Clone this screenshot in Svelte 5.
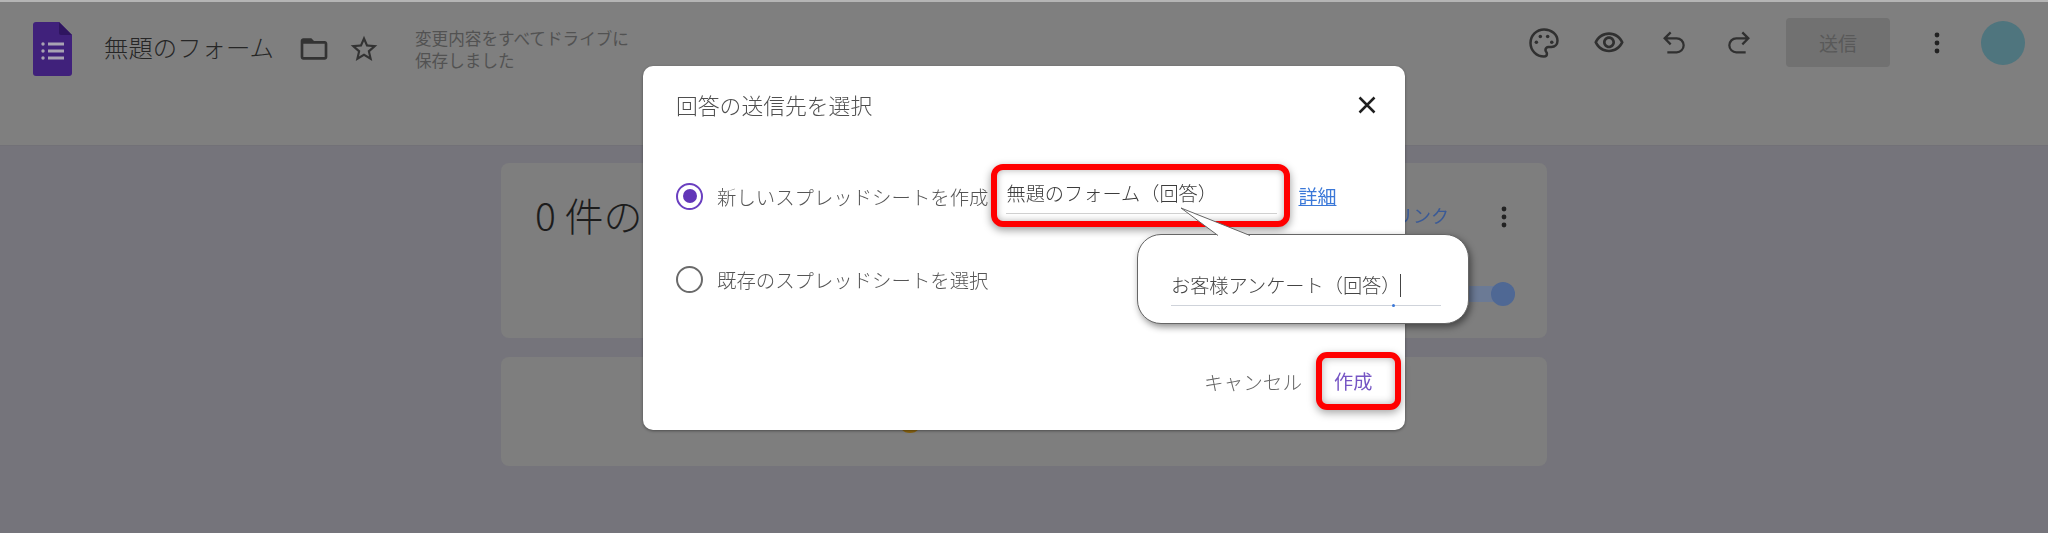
<script lang="ts">
    const headerActions = ["palette", "eye", "undo", "redo"];
</script>

<div class="page">
    <header class="topbar">
        <div class="left">
            <svg class="logo" viewBox="0 0 39 54">
                <path d="M3 0H26L39 13V51a3 3 0 0 1-3 3H3a3 3 0 0 1-3-3V3a3 3 0 0 1 3-3Z" fill="#40217b" />
                <path d="M26 0L39 13H28a2 2 0 0 1-2-2Z" fill="#2f1560" />
                <g fill="#a8a3b3">
                    <circle cx="10" cy="22" r="1.7" />
                    <circle cx="10" cy="29" r="1.7" />
                    <circle cx="10" cy="36" r="1.7" />
                    <rect x="15" y="20.5" width="16" height="3" />
                    <rect x="15" y="27.5" width="16" height="3" />
                    <rect x="15" y="34.5" width="16" height="3" />
                </g>
            </svg>
            <span class="doc-title">無題のフォーム</span>
            <svg class="folder" viewBox="0 0 24 24">
                <path d="M20 6h-8l-2-2H4c-1.1 0-1.99.9-1.99 2L2 18c0 1.1.9 2 2 2h16c1.1 0 2-.9 2-2V8c0-1.1-.9-2-2-2zm0 12H4V8h16v10z" />
            </svg>
            <svg class="star" viewBox="0 0 24 24">
                <path d="M22 9.24l-7.19-.62L12 2 9.19 8.63 2 9.24l5.46 4.73L5.82 21 12 17.27 18.18 21l-1.63-7.03L22 9.24zM12 15.4l-3.76 2.27 1-4.28-3.32-2.88 4.38-.38L12 6.1l1.71 4.04 4.38.38-3.32 2.88 1 4.28L12 15.4z" />
            </svg>
            <p class="saved">変更内容をすべてドライブに<br />保存しました</p>
        </div>
        <div class="right">
            <div class="actions">
                {#each headerActions as name}
                    <svg class="action" viewBox="0 0 24 24">
                        {#if name === "palette"}
                            <g transform="translate(12 12) scale(1.1) translate(-12 -12)">
                                <path class="line" d="M12 2.8C6.9 2.8 2.8 6.9 2.8 12s4.1 9.2 9.2 9.2c1.2 0 2-.9 2-1.9 0-.5-.2-1-.5-1.3-.3-.4-.5-.8-.5-1.3 0-1.1.9-2 2-2h2c2.6 0 4.2-1.9 4.2-4.2 0-4.3-4.1-7.7-9-7.7z" />
                                <circle cx="6.8" cy="11.5" r="1.2" />
                                <circle cx="9.5" cy="7.5" r="1.2" />
                                <circle cx="14.5" cy="7.5" r="1.2" />
                                <circle cx="17.3" cy="11.5" r="1.2" />
                            </g>
                        {:else if name === "eye"}
                            <path d="M12 6c3.79 0 7.17 2.13 8.82 5.5C19.17 14.87 15.79 17 12 17s-7.17-2.13-8.82-5.5C4.83 8.13 8.21 6 12 6m0-2C7 4 2.73 7.11 1 11.5 2.73 15.89 7 19 12 19s9.27-3.11 11-7.5C21.27 7.11 17 4 12 4zm0 5c1.38 0 2.5 1.12 2.5 2.5S13.38 14 12 14s-2.5-1.12-2.5-2.5S10.62 9 12 9m0-2c-2.48 0-4.5 2.02-4.5 4.5S9.52 16 12 16s4.5-2.02 4.5-4.5S14.48 7 12 7z" />
                        {:else if name === "undo"}
                            <path class="line" d="M9.5 4L5 8.5L9.5 13M5 8.5H14a5 5 0 0 1 0 10.5H7" />
                        {:else}
                            <path class="line" d="M14.5 4L19 8.5L14.5 13M19 8.5H10a5 5 0 0 0 0 10.5H17" />
                        {/if}
                    </svg>
                {/each}
            </div>
            <div class="send">送信</div>
            <svg class="more" viewBox="0 0 6 22">
                <circle cx="3" cy="3" r="2.4" />
                <circle cx="3" cy="11" r="2.4" />
                <circle cx="3" cy="19" r="2.4" />
            </svg>
            <div class="avatar"></div>
        </div>
    </header>

    <main class="content">
        <section class="card summary">
            <h2>0 件の回答</h2>
            <span class="link">リンク</span>
            <svg class="more card-more" viewBox="0 0 6 22">
                <circle cx="3" cy="3" r="2.4" />
                <circle cx="3" cy="11" r="2.4" />
                <circle cx="3" cy="19" r="2.4" />
            </svg>
            <div class="toggle"><span class="knob"></span></div>
        </section>
        <section class="card empty"><span class="emoji"></span></section>
    </main>

    <div class="overlay">
        <div class="modal">
            <div class="modal-head">
                <h3>回答の送信先を選択</h3>
                <svg class="close" viewBox="0 0 24 24">
                    <path d="M3 3L21 21M21 3L3 21" />
                </svg>
            </div>
            <div class="option first">
                <span class="radio checked"><span></span></span>
                <span class="label">新しいスプレッドシートを作成</span>
                <div class="name-box">
                    <div class="name-input">無題のフォーム（回答）</div>
                </div>
                <a class="detail" href="#top">詳細</a>
            </div>
            <div class="option second">
                <span class="radio"></span>
                <span class="label">既存のスプレッドシートを選択</span>
            </div>
            <div class="buttons">
                <span class="cancel">キャンセル</span>
                <div class="create-box">作成</div>
            </div>

            <div class="callout">
                <svg class="tail" viewBox="0 0 72 30">
                    <path d="M38 28.5L1 1L70 28.5" />
                </svg>
                <div class="callout-input">
                    <span>お客様アンケート（回答）</span><i class="caret"></i>
                    <b class="dot"></b>
                </div>
            </div>
        </div>
    </div>
</div>

<style>
    :global(body) {
        margin: 0;
        background: #75747b;
    }
    .page {
        position: relative;
        height: 533px;
        overflow: hidden;
        font-family: "Noto Sans CJK JP", "Liberation Sans", sans-serif;
        color: #4a4a4a;
        filter: blur(0.5px);
    }
    svg {
        display: block;
        flex: none;
    }
    .topbar {
        box-sizing: border-box;
        height: 146px;
        padding-bottom: 50px;
        display: flex;
        justify-content: space-between;
        align-items: center;
        background: #7f7f7f;
        border-top: 2px solid #b5b5b5;
        border-bottom: 1px solid #727177;
    }
    .left,
    .right,
    .actions {
        display: flex;
        align-items: center;
    }
    .left {
        padding-left: 33px;
    }
    .logo {
        width: 39px;
        height: 54px;
    }
    .doc-title {
        margin: 0 0 5px 32px;
        font-size: 24.4px;
        font-weight: 300;
        color: #262626;
        white-space: nowrap;
    }
    .folder {
        width: 32px;
        height: 32px;
        margin-left: 24px;
        fill: #333;
    }
    .star {
        width: 32px;
        height: 32px;
        margin-left: 18px;
        fill: #333;
    }
    .saved {
        margin: 0 0 0 35px;
        font-size: 16.6px;
        line-height: 22px;
        color: #525252;
    }
    .right {
        padding-right: 23px;
        margin-bottom: 12px;
    }
    .actions {
        gap: 33px;
    }
    .action {
        width: 32px;
        height: 32px;
        fill: #303030;
    }
    .action .line {
        fill: none;
        stroke: #303030;
        stroke-width: 1.7;
    }
    .action circle {
        fill: #303030;
    }
    .send {
        width: 104px;
        height: 49px;
        margin-left: 31px;
        display: flex;
        align-items: center;
        justify-content: center;
        background: #717171;
        border-radius: 4px;
        font-size: 19px;
        color: #595959;
    }
    .more {
        width: 6px;
        height: 22px;
        fill: #222;
    }
    .right .more {
        margin-left: 44px;
    }
    .avatar {
        width: 44px;
        height: 44px;
        margin-left: 41px;
        border-radius: 50%;
        background: #4f757e;
    }
    .content {
        width: 1046px;
        margin: 17px auto 0;
        display: flex;
        flex-direction: column;
        gap: 19px;
    }
    .card {
        box-sizing: border-box;
        position: relative;
        background: #7e7e7e;
        border-radius: 8px;
    }
    .summary {
        height: 175px;
        padding: 26px 34px;
    }
    .empty {
        height: 109px;
    }
    .emoji {
        position: absolute;
        left: 397px;
        top: 52px;
        width: 24px;
        height: 24px;
        border-radius: 50%;
        background: #8a6410;
    }
    .summary h2 {
        margin: 0;
        font-size: 39px;
        font-weight: 300;
        line-height: 50px;
        color: #1c1c1c;
    }
    .link {
        position: absolute;
        top: 39px;
        right: 98px;
        font-size: 18px;
        color: #3a5a96;
    }
    .card-more {
        position: absolute;
        top: 43px;
        right: 40px;
    }
    .toggle {
        position: absolute;
        top: 123px;
        right: 32px;
        width: 60px;
        height: 16px;
        background: #6b7a95;
        border-radius: 8px;
    }
    .knob {
        position: absolute;
        top: -4px;
        right: 0;
        width: 24px;
        height: 24px;
        border-radius: 50%;
        background: #4f6894;
    }
    .overlay {
        position: absolute;
        inset: 0;
        display: flex;
        justify-content: center;
        padding-top: 66px;
    }
    .modal {
        box-sizing: border-box;
        position: relative;
        width: 762px;
        height: 364px;
        padding: 0 0 0 33px;
        background: #fff;
        border-radius: 10px;
        box-shadow: 0 1px 3px rgba(0, 0, 0, 0.4);
    }
    .modal-head {
        display: flex;
        align-items: center;
        justify-content: space-between;
        height: 76px;
        margin-bottom: 2px;
        padding-right: 28px;
    }
    .modal-head h3 {
        margin: 0;
        font-size: 21.8px;
        font-weight: 300;
        color: #4f4f4f;
    }
    .close {
        width: 20px;
        height: 20px;
        margin-top: 2px;
        fill: none;
        stroke: #1f1f1f;
        stroke-width: 3;
    }
    .option {
        display: flex;
        align-items: center;
    }
    .first {
        margin-top: 21px;
        height: 64px;
    }
    .second {
        margin-top: 39px;
        height: 27px;
    }
    .first .radio,
    .first .label {
        margin-top: 2px;
    }
    .radio {
        box-sizing: border-box;
        width: 27px;
        height: 27px;
        flex: none;
        display: flex;
        align-items: center;
        justify-content: center;
        border: 2.5px solid #6a6a6a;
        border-radius: 50%;
    }
    .radio.checked {
        border-color: #6a3fc0;
    }
    .radio.checked span {
        width: 14px;
        height: 14px;
        border-radius: 50%;
        background: #6236b8;
    }
    .label {
        margin-left: 14px;
        font-size: 19.4px;
        font-weight: 300;
        color: #555;
        white-space: nowrap;
    }
    .name-box {
        box-sizing: border-box;
        width: 299px;
        height: 63px;
        margin-left: 3px;
        padding: 0 7px 6px 9px;
        border: 6px solid #f00;
        border-radius: 12px;
        box-shadow:
            0 3px 8px rgba(0, 0, 0, 0.4),
            inset 0 0 7px rgba(0, 0, 0, 0.3);
        background: #fff;
    }
    .name-input {
        height: 43px;
        line-height: 47px;
        font-size: 19.2px;
        font-weight: 300;
        color: #3c3c3c;
        white-space: nowrap;
        border-bottom: 1px solid #d0d0d0;
    }
    .detail {
        margin-left: 8px;
        font-size: 19px;
        color: #3b78d8;
    }
    .buttons {
        position: absolute;
        right: 4px;
        bottom: 20px;
        display: flex;
        align-items: center;
    }
    .cancel {
        font-size: 19.6px;
        font-weight: 300;
        color: #666;
    }
    .create-box {
        box-sizing: border-box;
        width: 85px;
        height: 58px;
        margin-left: 14px;
        padding-left: 12px;
        display: flex;
        align-items: center;
        border: 6px solid #f00;
        border-radius: 11px;
        font-size: 19.2px;
        color: #7655c4;
        background: #fff;
        box-shadow:
            0 3px 8px rgba(0, 0, 0, 0.35),
            inset 0 0 9px rgba(0, 0, 0, 0.3);
    }
    .callout {
        position: absolute;
        box-sizing: border-box;
        left: 494px;
        top: 168px;
        width: 332px;
        height: 90px;
        padding: 30px 27px 0 33px;
        background: #fff;
        border: 1px solid #666;
        border-radius: 24px;
        box-shadow: 2px 3px 7px rgba(0, 0, 0, 0.45);
    }
    .tail {
        position: absolute;
        left: 42px;
        top: -28px;
        width: 72px;
        height: 30px;
    }
    .tail path {
        fill: #fff;
        stroke: #666;
        stroke-width: 1;
    }
    .callout-input {
        position: relative;
        height: 40px;
        display: flex;
        align-items: center;
        border-bottom: 1px solid #cfd3da;
        font-size: 19.2px;
        font-weight: 300;
        color: #444;
    }
    .caret {
        width: 1px;
        height: 23px;
        background: #444;
    }
    .dot {
        position: absolute;
        left: 221px;
        bottom: -2px;
        width: 3px;
        height: 3px;
        border-radius: 50%;
        background: #3b78d8;
    }
</style>
